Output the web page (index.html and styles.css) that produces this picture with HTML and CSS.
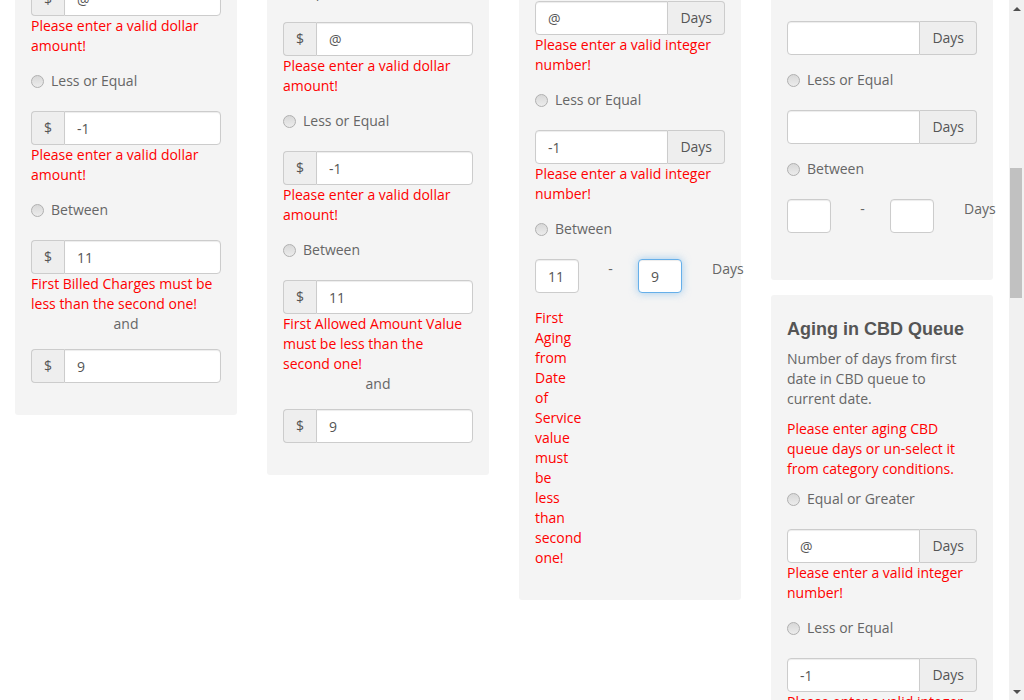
FILE: index.html
```html
<!DOCTYPE html>
<html lang="en">
<head>
<meta charset="utf-8">
<title>Edit Work Queue Rule</title>
<link rel="stylesheet" href="styles.css">
</head>
<body>
<div class="viewport">
<header class="topbar">
  <span class="brand">Claims Manager</span>
  <nav class="topnav"><a href="#">Work Queues</a><a href="#">Rules</a><a href="#">Reports</a></nav>
</header>
<main class="page">
  <div class="page-head">
    <h1>Edit Work Queue Rule</h1>
    <p>Define the categories a claim must match to be routed into this work queue.</p>
  </div>

  <section class="details">
    <h3>Rule Details</h3>
    <div class="details-grid">
      <div class="detail"><label>Rule Name</label><input class="form-control" type="text" value="High Value Aged Claims"></div>
      <div class="detail"><label>Work Queue</label><input class="form-control" type="text" value="CBD Follow Up"></div>
      <div class="detail"><label>Priority</label><input class="form-control" type="text" value="1"></div>
      <div class="detail"><label>Owner</label><input class="form-control" type="text" value="Billing Team"></div>
    </div>
  </section>

  <section class="categories">
    <h3>Category Conditions</h3>
    <p>Select the categories below and enter a value for each of them.</p>
    <div class="category-list">
      <label class="check"><input type="checkbox" checked> Billed Charges</label>
      <label class="check"><input type="checkbox" checked> Allowed Amount</label>
      <label class="check"><input type="checkbox" checked> Aging from Date of Service</label>
      <label class="check"><input type="checkbox" checked> Aging from Last Payment Date</label>
      <label class="check"><input type="checkbox" checked> Aging in CBD Queue</label>
    </div>
  </section>

  <div class="board">
    <!-- Column 1 -->
    <div class="column">
      <section class="card">
        <h4 class="card-title">Billed Charges</h4>
        <p class="card-desc">Total billed charges.</p>
        <label class="radio"><input class="radio-input" type="radio" name="billed"><span>Equal or Greater</span></label>
        <div class="field">
          <div class="input-group">
            <span class="addon addon-first">$</span>
            <input class="form-control" type="text" value="@" data-anchor>
          </div>
          <div class="error">Please enter a valid dollar amount!</div>
        </div>
        <label class="radio"><input class="radio-input" type="radio" name="billed"><span>Less or Equal</span></label>
        <div class="field">
          <div class="input-group">
            <span class="addon addon-first">$</span>
            <input class="form-control" type="text" value="-1">
          </div>
          <div class="error">Please enter a valid dollar amount!</div>
        </div>
        <label class="radio"><input class="radio-input" type="radio" name="billed"><span>Between</span></label>
        <div class="field field-tight">
          <div class="input-group">
            <span class="addon addon-first">$</span>
            <input class="form-control" type="text" value="11">
          </div>
          <div class="error">First Billed Charges must be less than the second one!</div>
        </div>
        <div class="and">and</div>
        <div class="field">
          <div class="input-group">
            <span class="addon addon-first">$</span>
            <input class="form-control" type="text" value="9">
          </div>
        </div>
      </section>
    </div>

    <!-- Column 2 -->
    <div class="column">
      <section class="card">
        <h4 class="card-title">Allowed Amount</h4>
        <p class="card-desc">Allowed amount from the remittance advice for each claim line.</p>
        <label class="radio"><input class="radio-input" type="radio" name="allowed"><span>Equal or Greater</span></label>
        <div class="field">
          <div class="input-group">
            <span class="addon addon-first">$</span>
            <input class="form-control" type="text" value="@">
          </div>
          <div class="error">Please enter a valid dollar amount!</div>
        </div>
        <label class="radio"><input class="radio-input" type="radio" name="allowed"><span>Less or Equal</span></label>
        <div class="field">
          <div class="input-group">
            <span class="addon addon-first">$</span>
            <input class="form-control" type="text" value="-1">
          </div>
          <div class="error">Please enter a valid dollar amount!</div>
        </div>
        <label class="radio"><input class="radio-input" type="radio" name="allowed"><span>Between</span></label>
        <div class="field field-tight">
          <div class="input-group">
            <span class="addon addon-first">$</span>
            <input class="form-control" type="text" value="11">
          </div>
          <div class="error">First Allowed Amount Value must be less than the second one!</div>
        </div>
        <div class="and">and</div>
        <div class="field">
          <div class="input-group">
            <span class="addon addon-first">$</span>
            <input class="form-control" type="text" value="9">
          </div>
        </div>
      </section>
    </div>

    <!-- Column 3 -->
    <div class="column">
      <section class="card">
        <h4 class="card-title">Aging from Date of Service</h4>
        <p class="card-desc">Days since service date.</p>
        <label class="radio"><input class="radio-input" type="radio" name="dos"><span>Equal or Greater</span></label>
        <div class="field">
          <div class="input-group">
            <input class="form-control" type="text" value="@">
            <span class="addon addon-last">Days</span>
          </div>
          <div class="error">Please enter a valid integer number!</div>
        </div>
        <label class="radio"><input class="radio-input" type="radio" name="dos"><span>Less or Equal</span></label>
        <div class="field">
          <div class="input-group">
            <input class="form-control" type="text" value="-1">
            <span class="addon addon-last">Days</span>
          </div>
          <div class="error">Please enter a valid integer number!</div>
        </div>
        <label class="radio"><input class="radio-input" type="radio" name="dos"><span>Between</span></label>
        <div class="range">
          <input class="form-control range-input" type="text" value="11">
          <span class="dash">-</span>
          <input class="form-control range-input is-focused" type="text" value="9">
          <span class="range-unit">Days</span>
        </div>
        <div class="error range-error">First Aging from Date of Service value must be less than second one!</div>
      </section>
    </div>

    <!-- Column 4 -->
    <div class="column">
      <section class="card">
        <h4 class="card-title">Aging from Last Payment Date</h4>
        <p class="card-desc">Number of days since last payment posted.</p>
        <label class="radio"><input class="radio-input" type="radio" name="payment"><span>Equal or Greater</span></label>
        <div class="field">
          <div class="input-group">
            <input class="form-control" type="text" value="">
            <span class="addon addon-last">Days</span>
          </div>
        </div>
        <label class="radio"><input class="radio-input" type="radio" name="payment"><span>Less or Equal</span></label>
        <div class="field">
          <div class="input-group">
            <input class="form-control" type="text" value="">
            <span class="addon addon-last">Days</span>
          </div>
        </div>
        <label class="radio"><input class="radio-input" type="radio" name="payment"><span>Between</span></label>
        <div class="range">
          <input class="form-control range-input" type="text" value="">
          <span class="dash">-</span>
          <input class="form-control range-input" type="text" value="">
          <span class="range-unit">Days</span>
        </div>
      </section>

      <section class="card">
        <h4 class="card-title">Aging in CBD Queue</h4>
        <p class="card-desc">Number of days from first date in CBD queue to current date.</p>
        <p class="cat-error">Please enter aging CBD queue days or un-select it from category conditions.</p>
        <label class="radio"><input class="radio-input" type="radio" name="cbd"><span>Equal or Greater</span></label>
        <div class="field">
          <div class="input-group">
            <input class="form-control" type="text" value="@">
            <span class="addon addon-last">Days</span>
          </div>
          <div class="error">Please enter a valid integer number!</div>
        </div>
        <label class="radio"><input class="radio-input" type="radio" name="cbd"><span>Less or Equal</span></label>
        <div class="field">
          <div class="input-group">
            <input class="form-control" type="text" value="-1">
            <span class="addon addon-last">Days</span>
          </div>
          <div class="error">Please enter a valid integer number!</div>
        </div>
        <label class="radio"><input class="radio-input" type="radio" name="cbd"><span>Between</span></label>
        <div class="range">
          <input class="form-control range-input" type="text" value="">
          <span class="dash">-</span>
          <input class="form-control range-input" type="text" value="">
          <span class="range-unit">Days</span>
        </div>
      </section>
    </div>
  </div>

  <footer class="actions">
    <button class="btn btn-primary" type="button">Save Rule</button>
    <button class="btn" type="button">Cancel</button>
  </footer>
</main>
</div>

<div class="scrollbar" aria-hidden="true">
  <span class="scroll-arrow scroll-arrow-up"></span>
  <div class="scroll-track"><div class="scroll-thumb"></div></div>
  <span class="scroll-arrow scroll-arrow-down"></span>
</div>
<script src="script.js"></script>
</body>
</html>
```

FILE: styles.css
```css
* { box-sizing: border-box; }

html, body { margin: 0; padding: 0; height: 100%; }

body {
  display: flex;
  height: 100vh;
  overflow: hidden;
  font-family: "Open Sans", "Liberation Sans", sans-serif;
  font-size: 14px;
  line-height: 20px;
  color: #666;
  background: #fff;
}

/* ---------- scrolling shell ---------- */
.viewport {
  flex: 1;
  min-width: 0;
  height: 100%;
  overflow: hidden;
}

.scrollbar {
  flex: none;
  width: 15px;
  height: 100%;
  display: flex;
  flex-direction: column;
  background: #f1f1f1;
}

.scroll-arrow {
  flex: none;
  height: 17px;
  display: flex;
  align-items: center;
  justify-content: center;
}
.scroll-arrow::before {
  content: "";
  width: 0;
  height: 0;
  border-left: 4px solid transparent;
  border-right: 4px solid transparent;
}
.scroll-arrow-up::before { border-bottom: 4px solid #505050; }
.scroll-arrow-down::before { border-top: 4px solid #505050; }

.scroll-track { flex: 1; padding: 0 2px 0 1px; }
.scroll-thumb {
  margin-top: 151px;
  height: 130px;
  background: #c1c1c1;
}

/* ---------- page chrome (above the current view) ---------- */
.topbar {
  height: 50px;
  display: flex;
  align-items: center;
  gap: 30px;
  padding: 0 15px;
  background: #2f3f4f;
  color: #fff;
}
.brand { font-size: 18px; font-weight: 600; }
.topnav { display: flex; gap: 20px; }
.topnav a { color: #cfd8e0; text-decoration: none; }

.page { padding-bottom: 1800px; }

.page-head { padding: 20px 15px 10px; }
.page-head h1 { margin: 0 0 10px; font-size: 24px; line-height: 30px; color: #444; font-weight: 600; }
.page-head p { margin: 0; }

.details, .categories { margin: 15px; padding: 20px; background: #fafafa; border: 1px solid #eee; border-radius: 3px; }
.details h3, .categories h3 { margin: 0 0 15px; font-size: 18px; line-height: 22px; color: #555; }
.details-grid { display: grid; grid-template-columns: 1fr 1fr; gap: 15px 30px; }
.detail { display: flex; flex-direction: column; gap: 5px; }
.detail label { font-weight: 600; color: #555; }
.categories p { margin: 0 0 15px; }
.category-list { display: flex; flex-wrap: wrap; gap: 10px 30px; }
.check { display: flex; align-items: center; gap: 6px; }

/* ---------- board of category cards ---------- */
.board {
  display: grid;
  grid-template-columns: repeat(4, 252px);
  align-items: start;
  padding-top: 20px;
}

.column {
  padding: 0 15px;
  display: flex;
  flex-direction: column;
  gap: 15px;
}

.card {
  background: #f4f4f4;
  border-radius: 3px;
  padding: 15px 16px 32px;
}

.card-title {
  margin: 10px 0;
  font-family: "Liberation Sans", Arial, sans-serif;
  font-weight: bold;
  font-size: 18px;
  line-height: 19px;
  color: #555;
}

.card-desc { margin: 0 0 10px; color: #666; }

.cat-error { margin: 0 0 10px; color: #ff0000; }

.radio {
  display: flex;
  align-items: center;
  gap: 7px;
  height: 20px;
  margin: 0 0 20px;
  color: #666;
  cursor: pointer;
}

.radio-input {
  -webkit-appearance: none;
  appearance: none;
  width: 13px;
  height: 13px;
  margin: 0;
  flex: none;
  border-radius: 50%;
  border: 1px solid #b0b0b0;
  background: linear-gradient(180deg, #d8d8d8 0%, #ececec 100%);
}

.field { margin-bottom: 15px; }
.field-tight { margin-bottom: 0; }
.card > .field:last-child { margin-bottom: 0; }

.input-group { display: flex; width: 100%; }

.form-control {
  display: block;
  width: 100%;
  min-width: 0;
  height: 34px;
  padding: 6px 12px;
  font-family: "Open Sans", "Liberation Sans", sans-serif;
  font-size: 14px;
  line-height: 20px;
  color: #555;
  background: #fff;
  border: 1px solid #ccc;
  border-radius: 4px;
  box-shadow: inset 0 1px 1px rgba(0, 0, 0, 0.075);
  outline: none;
}

.input-group .form-control { flex: 1; }

.addon {
  flex: none;
  height: 34px;
  padding: 6px 12px;
  font-size: 14px;
  line-height: 20px;
  color: #555;
  text-align: center;
  background: #eee;
  border: 1px solid #ccc;
}

.addon-first { border-right: 0; border-radius: 4px 0 0 4px; }
.addon-first + .form-control { border-radius: 0 4px 4px 0; }

.addon-last { border-left: 0; border-radius: 0 4px 4px 0; }
.input-group .form-control:first-child { border-radius: 4px 0 0 4px; }

.error { color: #ff0000; }

.and { text-align: center; color: #666; margin-bottom: 15px; }

.range {
  display: flex;
  align-items: flex-start;
  margin-bottom: 15px;
}

.range > * { flex: none; }

.range-input { width: 44px; }

.dash {
  width: 59px;
  padding-left: 4px;
  text-align: center;
  color: #666;
}

.range-unit {
  margin-left: 30px;
  white-space: nowrap;
  color: #666;
}

.is-focused {
  border-color: #66afe9;
  box-shadow: inset 0 1px 1px rgba(0, 0, 0, 0.075), 0 0 8px rgba(102, 175, 233, 0.6);
}

.range-error { width: 44px; }

.actions { display: flex; gap: 10px; padding: 30px 15px; }
.btn {
  font-family: "Open Sans", "Liberation Sans", sans-serif;
  font-size: 14px;
  padding: 6px 12px;
  border: 1px solid #ccc;
  border-radius: 4px;
  background: #fff;
  color: #333;
}
.btn-primary { background: #337ab7; border-color: #2e6da4; color: #fff; }
```

FILE: script.js
```js
(function () {
  function alignView() {
    var viewport = document.querySelector('.viewport');
    var anchor = document.querySelector('[data-anchor]');
    if (!viewport || !anchor) return;
    var offset = anchor.getBoundingClientRect().top - viewport.getBoundingClientRect().top + viewport.scrollTop;
    viewport.scrollTop = Math.round(offset + 18);
  }
  alignView();
  window.addEventListener('load', alignView);
})();
```
